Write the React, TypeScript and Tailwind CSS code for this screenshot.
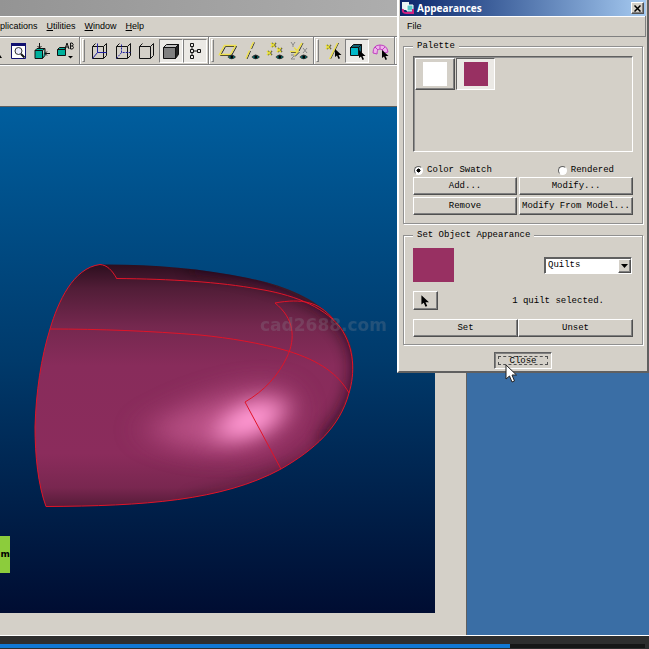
import type { ButtonHTMLAttributes, ReactNode } from 'react';

const RAISED = 'bg-[#d4d0c8] border border-t-white border-l-white border-r-[#505050] border-b-[#505050] shadow-[inset_-1px_-1px_0_#808080]';
const SUNKEN = 'border border-t-[#606060] border-l-[#606060] border-r-white border-b-white';
const ETCHED = 'border border-[#909090] shadow-[1px_1px_0_#fff,inset_1px_1px_0_#fff]';

function DialogButton({ className = '', ...rest }: ButtonHTMLAttributes<HTMLButtonElement>) {
  return <button type="button" className={`${RAISED} flex h-[18px] items-center justify-center whitespace-nowrap ${className}`} {...rest} />;
}

function ToolButton({ label, active = false, children }: { label: string; active?: boolean; children: ReactNode }) {
  return (
    <button
      type="button"
      aria-label={label}
      aria-pressed={active}
      className={`h-6 w-6 shrink-0 border ${active ? 'border-t-[#808080] border-l-[#808080] border-r-white border-b-white bg-[#ebe9e5]' : 'border-transparent'}`}
    >
      <svg viewBox="1 1 22 22" width="22" height="22" fill="none" stroke="#111" strokeWidth="1">
        {children}
      </svg>
    </button>
  );
}

function ToolGroup({ children, handle = true }: { children: ReactNode; handle?: boolean }) {
  return (
    <div className="flex shrink-0 items-center border-r border-[#808080] pr-px shadow-[1px_0_0_#fff]">
      {handle && <span className="mr-[2px] ml-[2px] h-[23px] w-[3px] border border-t-white border-l-white border-r-[#808080] border-b-[#808080]" />}
      {children}
    </div>
  );
}

function Arrow({ x = 0, y = 0 }: { x?: number; y?: number }) {
  return <path transform={`translate(${x} ${y})`} d="M0 0v8l2-1.500 1.500 3.500 1.500-.8-1.500-3.200h3z" fill="#000" stroke="none" />;
}

function Eye() {
  return (
    <g stroke="none">
      <path d="M11.500 18q4-5 8.500 0-4.500 4.500-8.500 0z" fill="#333" />
      <path d="M12.500 18q3-2.500 6.500 0-3.500 3-6.500 0z" fill="#007878" />
      <circle cx="15.800" cy="18" r="1.500" fill="#000" />
    </g>
  );
}

function Cross({ x, y }: { x: number; y: number }) {
  return (
    <g>
      <path d={`M${x + 1} ${y}l4 4m0-4l-4 4`} stroke="#444" strokeWidth="1.500" />
      <path d={`M${x} ${y}l4 4m0-4l-4 4`} stroke="#e6dc30" strokeWidth="1.500" />
    </g>
  );
}

function Toolbar() {
  return (
    <div className="flex h-[29px] items-stretch overflow-hidden border-t border-b border-[#808080] shadow-[inset_0_1px_0_#fff,0_1px_0_#fff]">
      <ToolGroup handle={false}>
        <svg viewBox="0 0 6 24" width="6" height="24"><path d="M0 16l2 3H0z" fill="#000" /></svg>
        <ToolButton label="Refit">
          <path d="M5.500 4.500h14v15h-14z" fill="#fff" stroke="#101070" />
          <path d="M5 4h15v3H5z" fill="#101070" stroke="none" />
          <circle cx="12.500" cy="12" r="3.500" fill="#eef" stroke="#333" />
          <path d="M15 15l3.500 3.500" strokeWidth="2" />
        </ToolButton>
        <ToolButton label="Reorient view">
          <path d="M5 11.500h7.500v8H5zM5 11.500l2-2h8l-2.500 2M15 9.500v7l-2.500 3" fill="#00b09c" />
          <path d="M9.500 4v5m-2-2l2 2 2-2M20 14.500h-5m2-2l-2 2 2 2" />
        </ToolButton>
        <ToolButton label="Saved view list">
          <path d="M3.500 10.500h8v6h-8zM3.500 10.500l2-2h6v2" fill="#00b09c" />
          <path d="M11 10L13 4l2 6m-3.500-2h3M16.500 4v6h2q2-1.500 0-3 1.500-1.500-.3-3zM16.500 7h2" />
          <path d="M14 17h5l-2.500 2.500z" fill="#000" stroke="none" />
        </ToolButton>
      </ToolGroup>
      <ToolGroup>
        <ToolButton label="Wireframe">
          <path d="M5.500 7.500h11v12h-11zM5.500 7.500l3-3M16.500 7.500l3-3M16.500 19.500l3-3V4.500" />
          <path d="M5.500 19.500l5-6h9M10.500 13.500v-9" stroke="#2020a0" />
        </ToolButton>
        <ToolButton label="Hidden line">
          <path d="M5.500 7.500h11v12h-11zM5.500 7.500l3-3M16.500 7.500l3-3M16.500 19.500l3-3V4.500" />
          <path d="M5.500 19.500l5-6h9M10.500 13.500v-9" stroke="#2020a0" strokeDasharray="2 1" />
        </ToolButton>
        <ToolButton label="No hidden">
          <path d="M4.500 7.500h11v12h-11zM4.500 7.500l3-3M15.500 7.500l3-3M15.500 19.500l3-3V4.500" />
        </ToolButton>
        <ToolButton label="Shading" active>
          <path d="M4.500 8.500h12v11h-12z" fill="#808080" />
          <path d="M4.500 8.500l3-3h12l-3 3z" fill="#c4c4c4" />
          <path d="M16.500 8.500l3-3v10l-3 4z" fill="#222" />
        </ToolButton>
        <ToolButton label="Model tree" active>
          <path d="M7.500 4.500h3v3h-3zM7.500 10.500h3v3h-3zM7.500 16.500h3v3h-3zM14.500 10.500h3v3h-3zM9 8v2m0 4v2m2-4h3" />
        </ToolButton>
      </ToolGroup>
      <ToolGroup>
        <ToolButton label="Datum planes">
          <path d="M8.500 6.500h11l-5 9h-11z" stroke="#222" transform="translate(1 1)" />
          <path d="M8.500 6.500h11l-5 9h-11z" stroke="#eee050" strokeWidth="1.500" />
          <Eye />
        </ToolButton>
        <ToolButton label="Datum axes">
          <path d="M14.500 3.500l-3 6.500M10.500 12l-3.500 8" stroke="#333" />
          <path d="M13.500 3l-3 6.500M9.500 11.500l-3.500 8" stroke="#eee050" strokeWidth="1.500" />
          <Eye />
        </ToolButton>
        <ToolButton label="Datum points">
          <Cross x={7} y={4} />
          <Cross x={3} y={12} />
          <Cross x={13} y={9} />
          <Eye />
        </ToolButton>
        <ToolButton label="Coordinate systems">
          <path d="M3 3l2 3 2-3M5 6v2M15 9l4 5m0-5l-4 5M3 16h4l-4 4h4" stroke="#888" />
          <path d="M3 13.500h7m-3-4l4 4-4 4M11 12l4-8" stroke="#333" />
          <path d="M2 12.500h7m-3-4l4 4-4 4M9 12l5-8" stroke="#eee050" strokeWidth="1.500" />
          <Eye />
        </ToolButton>
      </ToolGroup>
      <ToolGroup>
        <ToolButton label="Select datums">
          <Cross x={5} y={6} />
          <path d="M17.500 4L9.500 20" stroke="#333" />
          <path d="M16.500 4L8.500 20" stroke="#eee050" strokeWidth="1.500" />
          <Arrow x={14} y={10} />
        </ToolButton>
        <ToolButton label="Select geometry" active>
          <path d="M5.500 8.500h8v8h-8z" fill="#00b8c8" />
          <path d="M5.500 8.500l3-3h8l-3 3zM13.500 8.500l3-3v8l-3 3z" fill="#106070" />
          <Arrow x={14} y={11} />
        </ToolButton>
        <ToolButton label="Select quilts">
          <path d="M4 14q0-8 7-8 7 0 8 7l-4 1q-1-4-4-4-3 0-3 5z" fill="#eeb4ea" stroke="#c040c0" />
          <path d="M6 8l3 3m2-5v4m5-2l-3 3" stroke="#c040c0" />
          <Arrow x={13} y={11} />
        </ToolButton>
      </ToolGroup>
    </div>
  );
}

const HULL =
  'M46 506.500C38 485 35 455 35 427C36 392 41 358 50 329C58 302 73 268 100 264.500C148 264 200 268 248 278C285 286 313 297 334 319C347 332 354 348 353 367C353 376 351 385 349 393C340 427 314 450 281 469C222 501 143 506 46 506.500Z';

function Model() {
  return (
    <svg className="absolute inset-0 h-full w-full" viewBox="0 107 435 506" preserveAspectRatio="xMinYMin slice" role="img" aria-label="Shaded quilt">
      <defs>
        <linearGradient id="body" x1="0" y1="264" x2="0" y2="507" gradientUnits="userSpaceOnUse">
          <stop offset="0" stopColor="#2c0e1e" />
          <stop offset="0.100" stopColor="#511d37" />
          <stop offset="0.260" stopColor="#75284f" />
          <stop offset="0.420" stopColor="#882c5b" />
          <stop offset="0.780" stopColor="#8b2c5c" />
          <stop offset="0.920" stopColor="#792750" />
          <stop offset="1" stopColor="#551b38" />
        </linearGradient>
        <filter id="edge" x="-20%" y="-20%" width="140%" height="140%">
          <feGaussianBlur stdDeviation="8" />
        </filter>
        <filter id="wide" x="-50%" y="-100%" width="200%" height="300%">
          <feGaussianBlur stdDeviation="18 13" />
        </filter>
        <filter id="core" x="-100%" y="-100%" width="300%" height="300%">
          <feGaussianBlur stdDeviation="14 9" />
        </filter>
        <clipPath id="hull">
          <path d={HULL} />
        </clipPath>
      </defs>
      <path d={HULL} fill="url(#body)" />
      <g clipPath="url(#hull)">
        <path d="M190 260C285 268 361 305 361 367C360 400 345 425 325 443" fill="none" stroke="#1c0812" strokeWidth="18" opacity="0.800" filter="url(#edge)" />
        <path d="M330 442C300 466 260 488 190 504" fill="none" stroke="#1c0812" strokeWidth="8" opacity="0.500" filter="url(#edge)" />
        <path d="M145 430C180 406 235 386 275 386C300 400 290 430 262 444C230 456 180 454 145 430Z" fill="#cf6299" opacity="0.700" filter="url(#wide)" />
        <ellipse cx="250" cy="420" rx="34" ry="16" fill="#ff98d2" filter="url(#core)" transform="rotate(-22 250 420)" />
      </g>
      <g fill="none" stroke="#e01428" strokeWidth="1">
        <path d="M117 279C112 270 107 265 100 264.500C73 268 58 302 50 329C41 358 36 392 35 427C35 455 38 485 46 506.500C143 506 222 501 281 469C314 450 340 427 349 393C355 374 355 348 340 327C322 305 290 294 258 289C220 282 170 279 117 278.500" />
        <path d="M50 329C100 329 150 331 200 335C230 338 260 343 288 351C320 361 338 374 349 393" />
        <path d="M333 319C319 302 302 298 275 303C294 318 296 338 287 357C278 376 264 391 245 402L281 469" />
      </g>
      <text x="260" y="331" fill="#8a8a94" opacity="0.250" className="font-['DejaVu_Sans',sans-serif] text-[17px] font-bold">cad2688.com</text>
    </svg>
  );
}

function MainWindow() {
  return (
    <main className="mr-[182px] flex flex-1 flex-col overflow-hidden border-r border-[#606060] bg-[#d4d0c8]">
      <div className="h-4 bg-linear-to-r from-[#949494] to-[#b2b2b2]" />
      <nav className="flex h-5 items-center gap-[9px] border-t border-white font-['Liberation_Sans',sans-serif] text-[9px] text-black">
        <a href="#applications">plications</a>
        <a href="#utilities"><u>U</u>tilities</a>
        <a href="#window"><u>W</u>indow</a>
        <a href="#help"><u>H</u>elp</a>
      </nav>
      <Toolbar />
      <div className="h-[41px] shrink-0" />
      <section className="relative mr-[31px] mb-[22px] flex-1 overflow-hidden border-t border-[#606060] bg-linear-to-b from-[#005e9e] via-[#003a6b] to-[#000d32]">
        <Model />
        <span className="absolute bottom-10 left-0 flex h-[37px] w-[10px] items-center justify-end bg-[#8ccc3c] font-['DejaVu_Sans',sans-serif] text-[9px] font-bold">m</span>
      </section>
    </main>
  );
}

function AppearancesDialog() {
  return (
    <div role="dialog" aria-label="Appearances" className="absolute top-0 right-0 w-[252px] border-r-2 border-b-2 border-l-2 border-r-[#606060] border-b-[#606060] border-l-white bg-[#d4d0c8] pb-[2px] font-['Liberation_Mono',monospace] text-[9px] leading-3 text-black">
      <header className="mx-px flex h-4 items-center bg-linear-to-r from-[#0a246a] to-[#a6caf0] pr-[2px] font-['Open_Sans',sans-serif] text-[10px] font-bold text-white">
        <svg viewBox="0 0 16 16" width="16" height="16" className="mr-px">
          <path d="M2 2h7v8H2z" fill="#e8f4f4" />
          <path d="M7 5h6v6H7z" fill="#58c8c8" stroke="#fff" />
          <path d="M3 9q-1 4 3 4h6M13 9v5" stroke="#d02080" strokeWidth="2" fill="none" />
        </svg>
        <span className="flex-1">Appearances</span>
        <button type="button" aria-label="Close window" className={`${RAISED} flex h-3 w-[13px] items-center justify-center`}>
          <svg viewBox="0 0 7 7" width="7" height="7"><path d="M.5.500l6 6m0-6l-6 6" stroke="#000" strokeWidth="1.500" /></svg>
        </button>
      </header>
      <nav className="mx-px flex h-[21px] items-center border-r border-b border-[#808080] px-[7px] font-['Liberation_Sans',sans-serif] shadow-[inset_0_1px_0_#fff]">
        <a href="#file">File</a>
      </nav>

      <div className="flex flex-col px-1 pt-[3px]">
        <fieldset className={`${ETCHED} px-[9px] pb-2`}>
          <legend className="bg-[#d4d0c8] px-1">Palette</legend>
          <div className={`${SUNKEN} mt-[4px] flex h-24 items-start gap-px p-px shadow-[inset_1px_1px_0_#909090]`}>
            <button type="button" aria-label="White" className={`${RAISED} flex h-8 w-10 items-center justify-center`}>
              <span className="h-6 w-6 bg-white" />
            </button>
            <button type="button" aria-label="Magenta" className={`${SUNKEN} flex h-8 w-[39px] items-center justify-center bg-[#ebe9e5]`}>
              <span className="h-6 w-6 bg-[#983062]" />
            </button>
          </div>
          <div className="mt-3 flex justify-between pr-[19px]">
            <label className="flex items-center gap-1 pl-px">
              <input type="radio" name="display" defaultChecked className="h-[9px] w-[9px] appearance-none rounded-full border border-t-[#606060] border-r-white border-b-white border-l-[#606060] bg-white bg-radial from-black from-35% to-white to-45%" />
              Color Swatch
            </label>
            <label className="flex items-center gap-1">
              <input type="radio" name="display" className="h-[9px] w-[9px] appearance-none rounded-full border border-t-[#606060] border-r-white border-b-white border-l-[#606060] bg-white" />
              Rendered
            </label>
          </div>
          <div className="mt-px grid grid-cols-[104px_1fr] gap-x-[2px] gap-y-[2px]">
            <DialogButton>Add...</DialogButton>
            <DialogButton>Modify...</DialogButton>
            <DialogButton>Remove</DialogButton>
            <DialogButton>Modify From Model...</DialogButton>
          </div>
        </fieldset>

        <fieldset className={`${ETCHED} mt-[5px] px-[9px] pb-[7px]`}>
          <legend className="bg-[#d4d0c8] px-1">Set Object Appearance</legend>
          <div className="mt-[7px] flex items-center justify-between">
            <span className="h-[34px] w-[41px] bg-[#983062]" />
            <div className="relative mr-px">
              <select aria-label="Object type" defaultValue="Quilts" className={`${SUNKEN} block h-[17px] w-[88px] appearance-none bg-white pl-[3px] shadow-[inset_1px_1px_0_#606060]`}>
                <option>Quilts</option>
              </select>
              <span className={`${RAISED} pointer-events-none absolute top-[2px] right-px flex h-[14px] w-[13px] items-center justify-center`}>
                <svg viewBox="0 0 7 4" width="7" height="4"><path d="M0 0h7L3.500 4z" /></svg>
              </span>
            </div>
          </div>
          <div className="mt-[9px] flex items-center justify-between">
            <button type="button" aria-label="Pick object" className={`${RAISED} flex h-[19px] w-[25px] items-center justify-center`}>
              <svg viewBox="0 0 7 12" width="9" height="14"><Arrow y={1} /></svg>
            </button>
            <output className="mr-[29px]">1 quilt selected.</output>
          </div>
          <div className="mt-[9px] grid grid-cols-[105px_1fr]">
            <DialogButton>Set</DialogButton>
            <DialogButton>Unset</DialogButton>
          </div>
        </fieldset>

        <button type="button" className={`${SUNKEN} mt-[7px] flex h-[17px] w-[58px] self-center p-[3px] shadow-[inset_1px_1px_0_#808080]`}>
          <span className="flex h-full flex-1 items-center justify-center border border-dashed border-[#505050]">Close</span>
        </button>
      </div>
    </div>
  );
}

export default function App() {
  return (
    <div className="flex min-h-screen flex-col bg-[#2e2e2e]">
      <div className="relative flex flex-1 overflow-hidden border-b border-white bg-[#3a6ea5]">
        <MainWindow />
        <AppearancesDialog />
        <svg viewBox="0 0 12 19" width="12" height="19" className="pointer-events-none absolute top-[364px] right-[132px]">
          <path d="M1 1v14l3.500-3 2.500 6 2.500-1-2.500-6h4.500z" fill="#fff" stroke="#222" />
        </svg>
      </div>
      <footer className="px-0 pt-2 pb-px">
        <div className="mr-1 h-1 bg-[#161616]">
          <div className="h-1 w-[79%] bg-[#1078d4]" />
        </div>
      </footer>
    </div>
  );
}
